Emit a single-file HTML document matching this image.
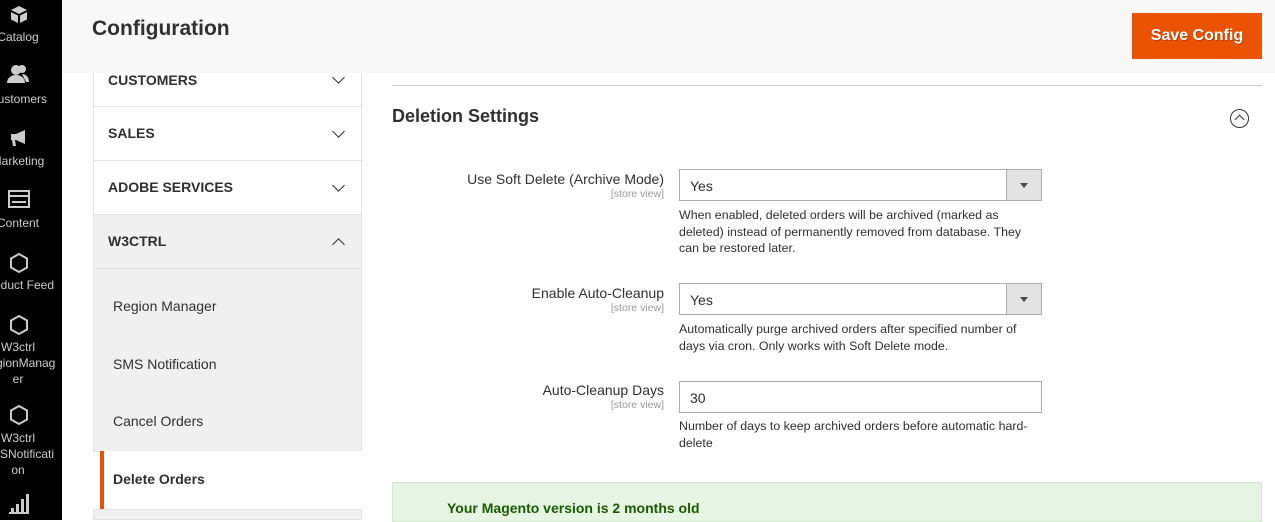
<!DOCTYPE html>
<html><head><style>
*{margin:0;padding:0;box-sizing:border-box}
body{width:1275px;height:520px;overflow:hidden;background:#fff;font-family:"Liberation Sans",sans-serif;color:#303030;position:relative}
.a{position:absolute}
#side{left:0;top:0;width:62px;height:520px;background:#000;overflow:hidden}
.ni{position:absolute;left:-32px;width:100px;text-align:center;color:#ccc;font-size:12px;line-height:16px}
#hdr{left:62px;top:0;width:1213px;height:73px;background:#f8f8f8}
.tab{position:absolute;left:93px;width:269px;border:1px solid #e3e3e3;border-top:none;font-weight:bold;font-size:14px;color:#303030;padding-left:14px}
.chev{position:absolute;right:18px;width:9px;height:9px;border-right:1.5px solid #333;border-bottom:1.5px solid #333}
.sub{position:absolute;left:113px;font-size:14px;color:#303030}
.lbl{position:absolute;right:611px;text-align:right;font-size:14px;color:#303030}
.sv{position:absolute;right:611px;text-align:right;font-size:10.5px;color:#999}
.sel{position:absolute;left:679px;width:363px;height:32px;border:1px solid #adadad;font-size:14px;padding:8px 10px;background:#fff}
.dd{position:absolute;right:0;top:0;width:35px;height:30px;background:#e3e3e3;border-left:1px solid #adadad}
.dd:after{content:"";position:absolute;left:13px;top:13px;border-left:4px solid transparent;border-right:4px solid transparent;border-top:5px solid #514943}
.help{position:absolute;left:679px;width:362px;font-size:12.4px;line-height:16.5px;color:#303030}
</style></head><body>
<div id="side" class="a">
<svg class="a" style="left:9px;top:4px" width="20" height="20" viewBox="0 0 20 20"><path d="M2 6l8-4 8 4-8 4z M2 8l7 3.5V19l-7-3.5z M18 8l-7 3.5V19l7-3.5z" fill="#ccc"/></svg>
<div class="ni" style="top:29px">Catalog</div>
<svg class="a" style="left:6px;top:64px" width="24" height="20" viewBox="0 0 24 20"><circle cx="10" cy="6" r="5" fill="#ccc"/><path d="M1 19c0-5 4-8 9-8s9 3 9 8z" fill="#ccc"/><circle cx="16" cy="5" r="4" fill="#ccc"/><path d="M16 10c4 0 7 3 7 8h-3" fill="#ccc"/></svg>
<div class="ni" style="top:91px">Customers</div>
<svg class="a" style="left:9px;top:128px" width="20" height="20" viewBox="0 0 20 20"><path d="M2 6h5l9-4v14l-9-4H6l1 6H4l-1-6H2z" fill="#ccc"/></svg>
<div class="ni" style="top:153px">Marketing</div>
<svg class="a" style="left:8px;top:190px" width="22" height="18" viewBox="0 0 22 18"><rect x="1" y="1" width="20" height="16" fill="none" stroke="#ccc" stroke-width="2"/><rect x="1" y="5" width="20" height="2" fill="#ccc"/><rect x="4" y="11" width="14" height="2" fill="#ccc"/></svg>
<div class="ni" style="top:215px">Content</div>
<svg class="a" style="left:9px;top:252px" width="20" height="22" viewBox="0 0 20 22"><path d="M10 2l8 4.5v9L10 20l-8-4.5v-9z" fill="none" stroke="#ccc" stroke-width="2"/></svg>
<div class="ni" style="top:277px">Product Feed</div>
<svg class="a" style="left:9px;top:314px" width="20" height="22" viewBox="0 0 20 22"><path d="M10 2l8 4.5v9L10 20l-8-4.5v-9z" fill="none" stroke="#ccc" stroke-width="2"/></svg>
<div class="ni" style="top:339px">W3ctrl<br>RegionManag<br>er</div>
<svg class="a" style="left:9px;top:404px" width="20" height="22" viewBox="0 0 20 22"><path d="M10 2l8 4.5v9L10 20l-8-4.5v-9z" fill="none" stroke="#ccc" stroke-width="2"/></svg>
<div class="ni" style="top:430px">W3ctrl<br>SMSNotificati<br>on</div>
<svg class="a" style="left:9px;top:494px" width="20" height="20" viewBox="0 0 20 20"><rect x="2" y="14" width="3" height="4" fill="#ccc"/><rect x="7" y="10" width="3" height="8" fill="#ccc"/><rect x="12" y="5" width="3" height="13" fill="#ccc"/><rect x="17" y="0" width="3" height="18" fill="#ccc"/><rect x="0" y="18" width="20" height="2" fill="#ccc"/></svg>
</div>
<div id="hdr" class="a"></div>
<div class="a" style="left:92px;top:17px;font-size:21px;font-weight:bold;color:#303030">Configuration</div>
<div class="a" style="left:1132px;top:13px;width:130px;height:46px;background:#eb5202;color:#fff;font-weight:bold;font-size:16px;text-align:center;line-height:46px;text-shadow:1px 1px 0 rgba(0,0,0,.25)">Save Config</div>

<div class="tab" style="top:73px;height:34px;line-height:14px;padding-top:0"><span style="position:relative;top:0">CUSTOMERS</span><span class="chev" style="top:0;transform:rotate(45deg)"></span></div>
<div class="tab" style="top:107px;height:54px;line-height:53px">SALES<span class="chev" style="top:20px;transform:rotate(45deg)"></span></div>
<div class="tab" style="top:161px;height:54px;line-height:53px">ADOBE SERVICES<span class="chev" style="top:20px;transform:rotate(45deg)"></span></div>
<div class="tab" style="top:215px;height:54px;line-height:53px;background:#f0f0f0">W3CTRL<span class="chev" style="top:25px;transform:rotate(225deg)"></span></div>
<div class="a" style="left:93px;top:269px;width:269px;height:183px;background:#f0f0f0;border:1px solid #e3e3e3;border-top:none"></div>
<div class="sub" style="top:298px">Region Manager</div>
<div class="sub" style="top:356px">SMS Notification</div>
<div class="sub" style="top:413px">Cancel Orders</div>
<div class="a" style="left:100px;top:451px;width:262px;height:58px;background:#fff;border-left:4px solid #eb5202"></div>
<div class="sub" style="top:471px;font-weight:bold">Delete Orders</div>
<div class="a" style="left:93px;top:509px;width:269px;height:11px;background:#f0f0f0;border:1px solid #e3e3e3"></div>

<div class="a" style="left:392px;top:85px;width:870px;height:1px;background:#ccc"></div>
<div class="a" style="left:392px;top:106px;font-size:18px;font-weight:bold;color:#303030">Deletion Settings</div>
<div class="a" style="left:1230px;top:109px;width:19px;height:19px;border:1.5px solid #333;border-radius:50%"></div>
<div class="a" style="left:1236px;top:116px;width:7px;height:7px;border-left:1.5px solid #333;border-top:1.5px solid #333;transform:rotate(45deg)"></div>

<div class="lbl" style="top:171px">Use Soft Delete (Archive Mode)</div>
<div class="sv" style="top:188px">[store view]</div>
<div class="sel" style="top:169px">Yes<div class="dd"></div></div>
<div class="help" style="top:207px">When enabled, deleted orders will be archived (marked as<br>deleted) instead of permanently removed from database. They<br>can be restored later.</div>

<div class="lbl" style="top:285px">Enable Auto-Cleanup</div>
<div class="sv" style="top:302px">[store view]</div>
<div class="sel" style="top:283px">Yes<div class="dd"></div></div>
<div class="help" style="top:321px">Automatically purge archived orders after specified number of<br>days via cron. Only works with Soft Delete mode.</div>

<div class="lbl" style="top:382px">Auto-Cleanup Days</div>
<div class="sv" style="top:399px">[store view]</div>
<div class="sel" style="top:381px">30</div>
<div class="help" style="top:418px">Number of days to keep archived orders before automatic hard-<br>delete</div>

<div class="a" style="left:392px;top:482px;width:870px;height:40px;background:#e5f4e3;border:1px solid #d0e5cc"></div>
<div class="a" style="left:447px;top:500px;font-size:14px;font-weight:bold;color:#185b00">Your Magento version is 2 months old</div>
</body></html>
